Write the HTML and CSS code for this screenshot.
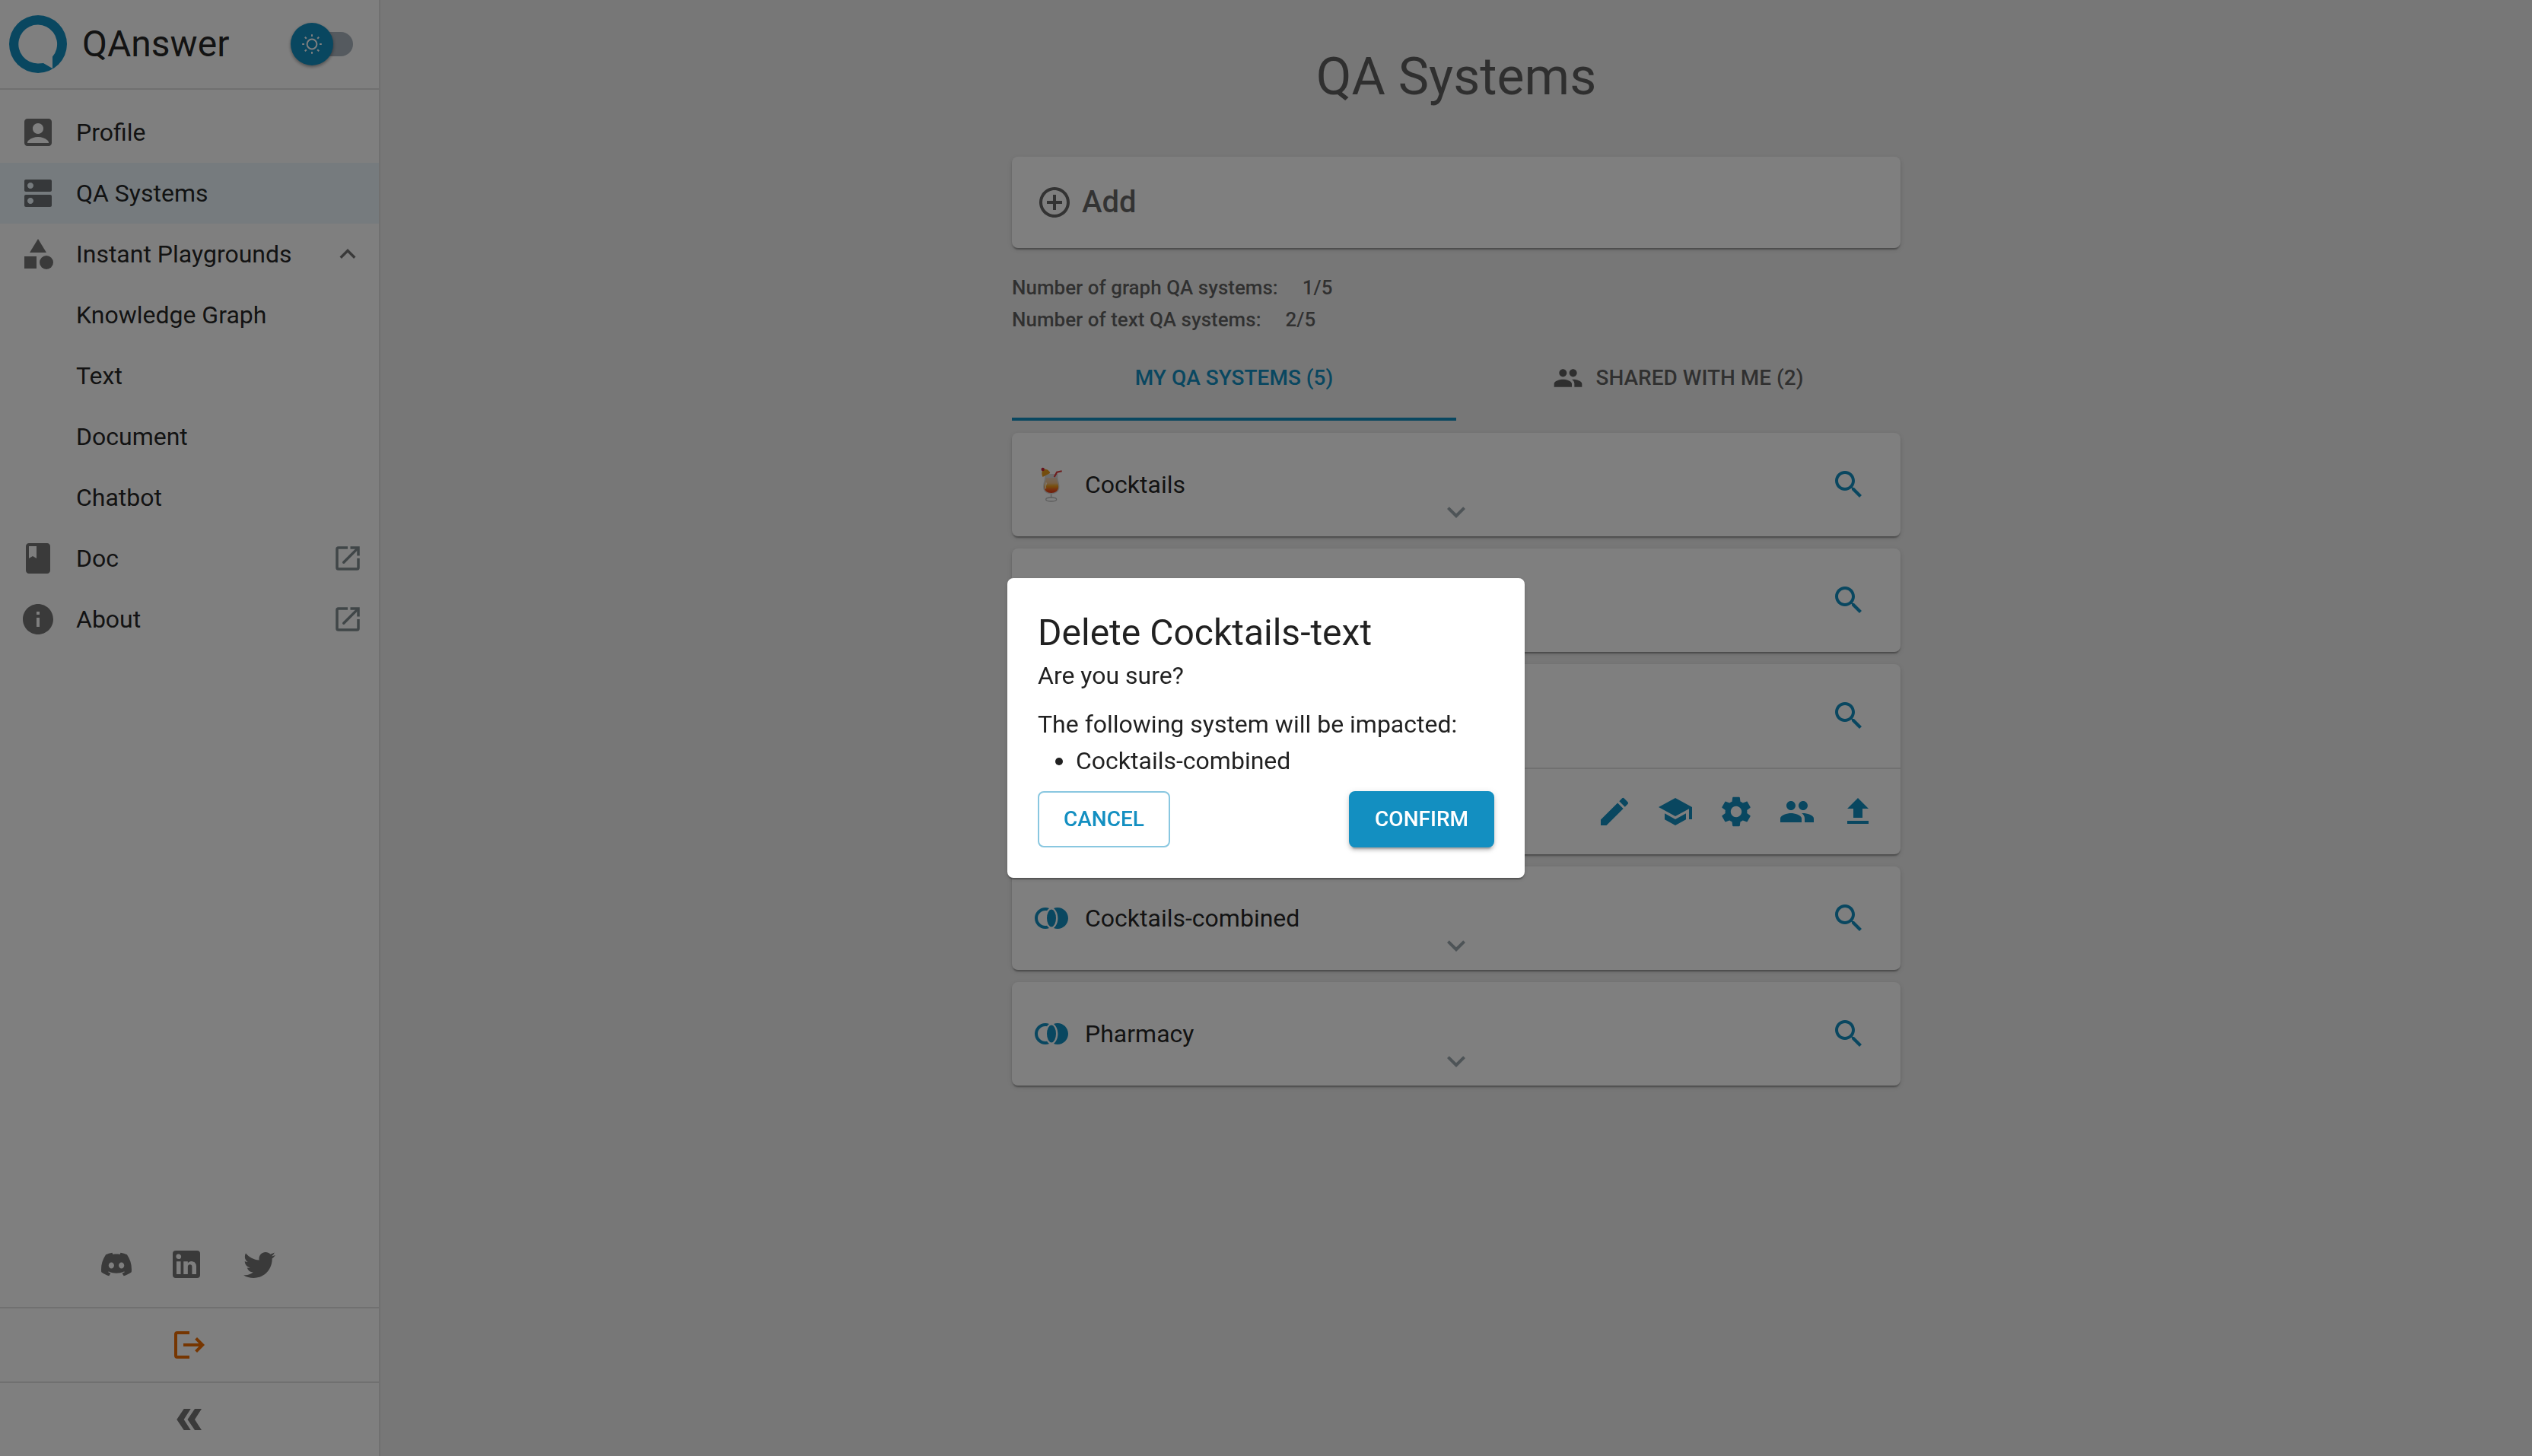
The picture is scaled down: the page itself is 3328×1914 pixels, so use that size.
FILE: index.html
```html
<!DOCTYPE html>
<html lang="en">
<head>
<meta charset="utf-8">
<meta name="viewport" content="width=device-width, initial-scale=1">
<title>QAnswer</title>
<link rel="stylesheet" href="styles.css">
</head>
<body>
<svg class="sprite" aria-hidden="true">
  <symbol id="i-open" viewBox="0 0 24 24"><g fill="none" stroke="currentColor" stroke-width="2"><path d="M12 4H5a1 1 0 0 0-1 1v14a1 1 0 0 0 1 1h14a1 1 0 0 0 1-1v-7M14 4h6v6"/><path stroke-linecap="round" d="M9 15 19.500 4.500"/></g></symbol>
  <symbol id="i-search" viewBox="0 0 24 24"><path d="M15.500 14h-.79l-.28-.27C15.410 12.590 16 11.110 16 9.500 16 5.910 13.090 3 9.500 3S3 5.910 3 9.500 5.910 16 9.500 16c1.610 0 3.090-.59 4.230-1.570l.27.28v.79l5 4.990L20.490 19l-4.990-5zm-6 0C7.010 14 5 11.990 5 9.500S7.010 5 9.500 5 14 7.010 14 9.500 11.990 14 9.500 14z"/></symbol>
  <symbol id="i-down" viewBox="0 0 24 24"><path d="M16.590 8.590 12 13.170 7.410 8.590 6 10l6 6 6-6z"/></symbol>
  <symbol id="i-people" viewBox="0 0 24 24"><path d="M16 11c1.660 0 2.990-1.340 2.990-3S17.660 5 16 5s-3 1.340-3 3 1.340 3 3 3zm-8 0c1.660 0 2.990-1.340 2.990-3S9.660 5 8 5 5 6.340 5 8s1.340 3 3 3zm0 2c-2.330 0-7 1.170-7 3.500V19h14v-2.500c0-2.330-4.670-3.500-7-3.500zm8 0c-.29 0-.62.02-.97.05 1.160.84 1.970 1.970 1.970 3.450V19h6v-2.500c0-2.330-4.670-3.500-7-3.500z"/></symbol>
  <symbol id="i-join" viewBox="0 0 24 24"><ellipse cx="12" cy="12" rx="3" ry="5.740"/><path d="M9.040 16.870c-.33.08-.68.13-1.040.13-2.760 0-5-2.240-5-5s2.240-5 5-5c.36 0 .71.05 1.040.13.39-.56.88-1.120 1.490-1.630C9.750 5.190 8.900 5 8 5c-3.860 0-7 3.140-7 7s3.140 7 7 7c.9 0 1.750-.19 2.530-.5-.61-.51-1.100-1.070-1.490-1.630zM16 5c-.9 0-1.750.19-2.530.5C15.400 7.100 16.200 9.600 16.200 12s-.8 4.900-2.730 6.500c.78.31 1.630.5 2.530.5 3.860 0 7-3.140 7-7s-3.140-7-7-7z"/></symbol>
</svg>

<div class="app">
  <aside class="sidebar">
    <header class="brand">
      <svg class="brand-logo" viewBox="0 0 76 76" aria-hidden="true"><circle cx="38" cy="38" r="38" fill="#138fc1"/><path d="M57 54.500V70L45 63c-2 .3-4.500.4-7 .4A25.400 25.400 0 1 1 57 54.500z" fill="#fff"/></svg>
      <span class="brand-name">QAnswer</span>
      <label class="switch">
        <input type="checkbox" class="switch-track" aria-label="Dark mode">
        <span class="switch-thumb">
          <svg viewBox="0 0 28 28" aria-hidden="true"><g fill="none" stroke="#fff" stroke-width="2"><circle cx="14" cy="14" r="6.400"/><path d="M14 1.200v2.800M14 24v2.800M1.200 14H4M24 14h2.800M4.800 4.800l2 2M21.200 21.200l2 2M4.800 23.200l2-2M21.200 6.800l2-2"/></g></svg>
        </span>
      </label>
    </header>

    <nav class="menu">
      <a class="menu-item" href="#profile">
        <svg class="icon" viewBox="0 0 24 24"><path d="M19 3H5c-1.100 0-2 .9-2 2v14c0 1.100.9 2 2 2h14c1.100 0 2-.9 2-2V5c0-1.100-.9-2-2-2zm-7 3c1.930 0 3.500 1.570 3.500 3.500S13.930 13 12 13s-3.500-1.570-3.500-3.500S10.070 6 12 6zm7 13H5v-.23c0-.62.28-1.200.76-1.580C7.470 15.820 9.640 15 12 15s4.530.82 6.240 2.190c.48.38.76.97.76 1.580V19z"/></svg>
        <span>Profile</span>
      </a>
      <a class="menu-item is-selected" href="#systems" aria-current="page">
        <svg class="icon" viewBox="0 0 24 24"><path d="M20 13H4c-.55 0-1 .45-1 1v6c0 .55.45 1 1 1h16c.55 0 1-.45 1-1v-6c0-.55-.45-1-1-1zM7 19c-1.100 0-2-.9-2-2s.9-2 2-2 2 .9 2 2-.9 2-2 2zM20 3H4c-.55 0-1 .45-1 1v6c0 .55.45 1 1 1h16c.55 0 1-.45 1-1V4c0-.55-.45-1-1-1zM7 9c-1.100 0-2-.9-2-2s.9-2 2-2 2 .9 2 2-.9 2-2 2z"/></svg>
        <span>QA Systems</span>
      </a>
      <button class="menu-item" type="button" aria-expanded="true">
        <svg class="icon" viewBox="0 0 24 24"><path d="m12 2-5.500 9h11z"/><circle cx="17.500" cy="17.500" r="4.500"/><path d="M3 13.500h8v8H3z"/></svg>
        <span>Instant Playgrounds</span>
        <svg class="icon-end" viewBox="0 0 24 24"><path d="m12 8-6 6 1.410 1.410L12 10.830l4.590 4.580L18 14z"/></svg>
      </button>
      <a class="menu-item is-nested" href="#graph">Knowledge Graph</a>
      <a class="menu-item is-nested" href="#text">Text</a>
      <a class="menu-item is-nested" href="#document">Document</a>
      <a class="menu-item is-nested" href="#chatbot">Chatbot</a>
      <a class="menu-item" href="#doc">
        <svg class="icon" viewBox="0 0 24 24"><path d="M18 2H6c-1.100 0-2 .9-2 2v16c0 1.100.9 2 2 2h12c1.100 0 2-.9 2-2V4c0-1.100-.9-2-2-2zM6 4h5v8l-2.500-1.500L6 12V4z"/></svg>
        <span>Doc</span>
        <svg class="icon-end is-external"><use href="#i-open"/></svg>
      </a>
      <a class="menu-item" href="#about">
        <svg class="icon" viewBox="0 0 24 24"><path d="M12 2C6.480 2 2 6.480 2 12s4.480 10 10 10 10-4.480 10-10S17.520 2 12 2zm1 15h-2v-6h2v6zm0-8h-2V7h2v2z"/></svg>
        <span>About</span>
        <svg class="icon-end is-external"><use href="#i-open"/></svg>
      </a>
    </nav>

    <div class="social">
      <a href="#discord" aria-label="Discord"><svg class="icon is-discord" viewBox="0 0 24 24"><path d="M20.317 4.3698a19.7913 19.7913 0 00-4.8851-1.5152.0741.0741 0 00-.0785.0371c-.211.3753-.4447.8648-.6083 1.2495-1.8447-.2762-3.68-.2762-5.4868 0-.1636-.3933-.4058-.8742-.6177-1.2495a.077.077 0 00-.0785-.037 19.7363 19.7363 0 00-4.8852 1.515.0699.0699 0 00-.0321.0277C.5334 9.0458-.319 13.5799.0992 18.0578a.0824.0824 0 00.0312.0561c2.0528 1.5076 4.0413 2.4228 5.9929 3.0294a.0777.0777 0 00.0842-.0276c.4616-.6304.8731-1.2952 1.226-1.9942a.076.076 0 00-.0416-.1057c-.6528-.2476-1.2743-.5495-1.8722-.8923a.077.077 0 01-.0076-.1277c.1258-.0943.2517-.1923.3718-.2914a.0743.0743 0 01.0776-.0105c3.9278 1.7933 8.18 1.7933 12.0614 0a.0739.0739 0 01.0785.0095c.1202.099.246.1981.3728.2924a.077.077 0 01-.0066.1276 12.2986 12.2986 0 01-1.873.8914.0766.0766 0 00-.0407.1067c.3604.698.7719 1.3628 1.225 1.9932a.076.076 0 00.0842.0286c1.961-.6067 3.9495-1.5219 6.0023-3.0294a.077.077 0 00.0313-.0552c.5004-5.177-.8382-9.6739-3.5485-13.6604a.061.061 0 00-.0312-.0286zM8.02 15.3312c-1.1825 0-2.1569-1.0857-2.1569-2.419 0-1.3332.9555-2.4189 2.157-2.4189 1.2108 0 2.1757 1.0952 2.1568 2.419 0 1.3332-.9555 2.4189-2.1569 2.4189zm7.9748 0c-1.1825 0-2.1569-1.0857-2.1569-2.419 0-1.3332.9554-2.4189 2.1569-2.4189 1.2108 0 2.1757 1.0952 2.1568 2.419 0 1.3332-.946 2.4189-2.1568 2.4189Z"/></svg></a>
      <a href="#linkedin" aria-label="LinkedIn"><svg class="icon" viewBox="0 0 24 24"><path d="M19 3a2 2 0 0 1 2 2v14a2 2 0 0 1-2 2H5a2 2 0 0 1-2-2V5a2 2 0 0 1 2-2h14m-.5 15.500v-5.300a3.260 3.260 0 0 0-3.260-3.260c-.85 0-1.840.52-2.320 1.300v-1.110h-2.790v8.370h2.790v-4.930c0-.77.62-1.400 1.390-1.400a1.400 1.400 0 0 1 1.400 1.400v4.930h2.790M6.880 8.560a1.680 1.680 0 0 0 1.680-1.680c0-.93-.75-1.690-1.680-1.690a1.690 1.690 0 0 0-1.690 1.690c0 .93.76 1.680 1.690 1.680m1.390 9.940v-8.370H5.500v8.370h2.770z"/></svg></a>
      <a href="#twitter" aria-label="Twitter"><svg class="icon" viewBox="0 0 24 24"><path d="M22.460 6c-.77.35-1.600.58-2.460.69.88-.53 1.560-1.370 1.880-2.380-.83.5-1.750.85-2.720 1.050C18.370 4.500 17.260 4 16 4c-2.350 0-4.270 1.920-4.270 4.290 0 .34.04.67.11.98C8.280 9.090 5.110 7.380 3 4.790c-.37.63-.58 1.370-.58 2.150 0 1.490.75 2.810 1.910 3.560-.71 0-1.370-.2-1.950-.5v.03c0 2.080 1.480 3.820 3.440 4.210a4.220 4.220 0 0 1-1.930.07 4.280 4.280 0 0 0 4 2.980 8.521 8.521 0 0 1-5.330 1.840c-.34 0-.68-.02-1.020-.06C3.440 20.290 5.700 21 8.120 21 16 21 20.330 14.460 20.330 8.790c0-.19 0-.37-.01-.56.84-.6 1.560-1.360 2.140-2.230z"/></svg></a>
    </div>
    <button class="side-action is-logout" type="button" aria-label="Log out">
      <svg class="icon" viewBox="0 0 24 24"><path fill="none" stroke="currentColor" stroke-width="2" d="M12 4H4a1 1 0 0 0-1 1v14a1 1 0 0 0 1 1h8M8 12h12.500M16.300 7.700 20.600 12l-4.300 4.300"/></svg>
    </button>
    <button class="side-action" type="button" aria-label="Collapse menu">
      <svg class="icon" viewBox="0 0 48 48"><path d="M7.300 24 16.700 10h9L16.700 24l9 14h-9zM21.500 24 31 10h9L31 24l9 14h-9z"/></svg>
    </button>
  </aside>

  <main class="main">
    <div class="content">
      <h1 class="title">QA Systems</h1>

      <button class="card add-card" type="button">
        <svg class="icon" viewBox="0 0 24 24"><path d="M13 7h-2v4H7v2h4v4h2v-4h4v-2h-4V7zm-1-5C6.480 2 2 6.480 2 12s4.480 10 10 10 10-4.480 10-10S17.520 2 12 2zm0 18c-4.410 0-8-3.590-8-8s3.590-8 8-8 8 3.590 8 8-3.590 8-8 8z"/></svg>
        <span>Add</span>
      </button>

      <dl class="quota">
        <div class="quota-row"><dt>Number of graph QA systems:</dt><dd>1/5</dd></div>
        <div class="quota-row"><dt>Number of text QA systems:</dt><dd>2/5</dd></div>
      </dl>

      <div class="tabs" role="tablist">
        <button class="tab is-active" type="button" role="tab" aria-selected="true">MY QA SYSTEMS (5)</button>
        <button class="tab" type="button" role="tab" aria-selected="false">
          <svg class="tab-icon"><use href="#i-people"/></svg>
          <span>SHARED WITH ME (2)</span>
        </button>
      </div>

      <div class="systems">
        <article class="card">
          <div class="system">
            <div class="system-name">
              <svg class="icon" viewBox="0 0 48 48" aria-hidden="true">
                <defs><linearGradient id="drink" x1="0" y1="0" x2="0" y2="1"><stop offset="0" stop-color="#e8cdb4"/><stop offset=".35" stop-color="#efc08a"/><stop offset=".55" stop-color="#f0a01c"/><stop offset=".8" stop-color="#ee5a1c"/><stop offset="1" stop-color="#e03818"/></linearGradient></defs>
                <path d="M15 10h17.500c-.3 3-.3 5 .4 8 .7 3 1.600 6 1.600 9 0 6-4.500 9.500-10.800 9.500S13 33 13 27c0-3 .9-6 1.600-9 .7-3 .7-5 .4-8z" fill="#ccc" fill-opacity=".75"/>
                <path d="M16.500 15h14.700c-.1 2 .1 3.500.6 5 .7 2.500 1.400 4.500 1.400 7 0 5-4 8-9.400 8s-9.400-3-9.400-8c0-2.500.7-4.500 1.400-7 .5-1.500.8-3 .7-5z" fill="url(#drink)"/>
                <path d="M22.700 36.500h2V42h-2z" fill="#ccc"/>
                <ellipse cx="23.700" cy="43.500" rx="7" ry="2.500" fill="none" stroke="#bcbcbc" stroke-width="1.300"/>
                <path d="M27.700 14 31.200 7.800l6.500-1.500" fill="none" stroke="#dc3c3c" stroke-width="2.200"/>
                <path d="M12.500 14c-1.500-3-1.500-6.500 0-9.500 3.500-2 9 .5 9.700 4.500z" fill="#e89a1c"/>
                <circle cx="12.700" cy="4" r="2.200" fill="#c82838"/>
                <path d="M17.500 21.500c-1.300 2.500-1.700 5-1.200 8" fill="none" stroke="#fff" stroke-opacity=".7" stroke-width="1.800"/>
              </svg>
              <span>Cocktails</span>
            </div>
            <button class="expand" type="button" aria-label="Expand"><svg class="icon"><use href="#i-down"/></svg></button>
            <button class="search" type="button" aria-label="Search"><svg class="icon"><use href="#i-search"/></svg></button>
          </div>
        </article>

        <article class="card">
          <div class="system">
            <button class="search" type="button" aria-label="Search"><svg class="icon"><use href="#i-search"/></svg></button>
          </div>
        </article>

        <article class="card">
          <div class="system">
            <button class="search" type="button" aria-label="Search"><svg class="icon"><use href="#i-search"/></svg></button>
          </div>
          <div class="system-actions">
            <button type="button" aria-label="Edit"><svg class="icon" viewBox="0 0 24 24"><path d="M3 17.250V21h3.750L17.810 9.940l-3.750-3.750L3 17.250zM20.710 7.040c.39-.39.39-1.020 0-1.410l-2.340-2.340a.9959.9959 0 0 0-1.410 0l-1.830 1.830 3.750 3.750 1.830-1.830z"/></svg></button>
            <button type="button" aria-label="Train"><svg class="icon" viewBox="0 0 24 24"><path d="M5 13.180v4L12 21l7-3.820v-4L12 17l-7-3.820zM12 3 1 9l11 6 9-4.910V17h2V9L12 3z"/></svg></button>
            <button type="button" aria-label="Settings"><svg class="icon" viewBox="0 0 24 24"><path d="M19.140 12.940c.04-.3.06-.61.06-.94 0-.32-.02-.64-.07-.94l2.030-1.580c.18-.14.23-.41.12-.61l-1.920-3.320c-.12-.22-.37-.29-.59-.22l-2.390.96c-.5-.38-1.030-.7-1.620-.94l-.36-2.540c-.04-.24-.24-.41-.48-.41h-3.840c-.24 0-.43.17-.47.41l-.36 2.540c-.59.24-1.130.57-1.620.94l-2.390-.96c-.22-.08-.47 0-.59.22L2.740 8.870c-.12.21-.08.47.12.61l2.030 1.580c-.05.3-.09.63-.09.94s.02.64.07.94l-2.030 1.580c-.18.14-.23.41-.12.61l1.920 3.320c.12.22.37.29.59.22l2.390-.96c.5.38 1.030.7 1.620.94l.36 2.540c.05.24.24.41.48.41h3.840c.24 0 .44-.17.47-.41l.36-2.540c.59-.24 1.130-.56 1.620-.94l2.390.96c.22.08.47 0 .59-.22l1.920-3.320c.12-.22.07-.47-.12-.61l-2.010-1.580zM12 15.600c-1.980 0-3.600-1.620-3.600-3.600s1.620-3.600 3.600-3.600 3.600 1.620 3.600 3.600-1.620 3.600-3.600 3.600z"/></svg></button>
            <button type="button" aria-label="Share"><svg class="icon"><use href="#i-people"/></svg></button>
            <button type="button" aria-label="Upload"><svg class="icon" viewBox="0 0 24 24"><path d="M5 20h14v-2H5v2zm0-10h4v6h6v-6h4l-7-7-7 7z"/></svg></button>
          </div>
        </article>

        <article class="card">
          <div class="system">
            <div class="system-name"><svg class="icon is-primary"><use href="#i-join"/></svg><span>Cocktails-combined</span></div>
            <button class="expand" type="button" aria-label="Expand"><svg class="icon"><use href="#i-down"/></svg></button>
            <button class="search" type="button" aria-label="Search"><svg class="icon"><use href="#i-search"/></svg></button>
          </div>
        </article>

        <article class="card">
          <div class="system">
            <div class="system-name"><svg class="icon is-primary"><use href="#i-join"/></svg><span>Pharmacy</span></div>
            <button class="expand" type="button" aria-label="Expand"><svg class="icon"><use href="#i-down"/></svg></button>
            <button class="search" type="button" aria-label="Search"><svg class="icon"><use href="#i-search"/></svg></button>
          </div>
        </article>
      </div>
    </div>
  </main>
</div>

<div class="backdrop">
  <section class="dialog" role="dialog" aria-modal="true" aria-labelledby="dialog-title">
    <h2 class="dialog-title" id="dialog-title">Delete Cocktails-text</h2>
    <p class="dialog-question">Are you sure?</p>
    <p class="dialog-note">The following system will be impacted:</p>
    <ul class="dialog-list"><li>Cocktails-combined</li></ul>
    <div class="dialog-actions">
      <button class="btn btn-outlined" type="button">CANCEL</button>
      <button class="btn btn-contained" type="button">CONFIRM</button>
    </div>
  </section>
</div>
</body>
</html>
```
FILE: styles.css
```css
:root {
  --primary: #138fc1;
  --text: rgba(0, 0, 0, 0.87);
  --text-secondary: rgba(0, 0, 0, 0.6);
  --icon: rgba(0, 0, 0, 0.54);
  --divider: #e0e0e0;
}

* {
  box-sizing: border-box;
}

body {
  margin: 0;
  background: #eee;
  color: var(--text);
  font-family: Roboto, "Liberation Sans", sans-serif;
  font-size: 32px;
  line-height: 48px;
}

button {
  padding: 0;
  border: 0;
  background: none;
  color: inherit;
  font: inherit;
  cursor: pointer;
}

a {
  color: inherit;
  text-decoration: none;
}

svg {
  display: block;
  flex: none;
  fill: currentColor;
}

.sprite {
  display: none;
}

.icon {
  width: 48px;
  height: 48px;
}

.icon.is-primary {
  color: var(--primary);
}

.app {
  display: flex;
  min-height: 100vh;
}

/* Sidebar */

.sidebar {
  display: flex;
  flex: none;
  flex-direction: column;
  width: 500px;
  border-right: 2px solid var(--divider);
  background: #fff;
}

.brand {
  display: flex;
  align-items: center;
  height: 118px;
  padding: 0 34px 0 12px;
  border-bottom: 2px solid var(--divider);
}

.brand-logo {
  width: 76px;
  height: 76px;
}

.brand-name {
  flex: 1;
  margin-left: 20px;
  font-size: 48px;
}

.switch {
  position: relative;
  display: flex;
  align-items: center;
  width: 82px;
  height: 56px;
}

.switch-track {
  width: 76px;
  height: 32px;
  margin: 0 0 0 auto;
  border-radius: 16px;
  background: #aab4be;
  appearance: none;
}

.switch-thumb {
  position: absolute;
  top: 0;
  left: 0;
  display: grid;
  place-items: center;
  width: 56px;
  height: 56px;
  border-radius: 50%;
  background: var(--primary);
  box-shadow: 0 2px 4px rgba(0, 0, 0, 0.4);
}

.switch-thumb svg {
  width: 28px;
  height: 28px;
}

.menu {
  display: flex;
  flex: 1;
  flex-direction: column;
  padding: 16px 0;
}

.menu-item {
  display: flex;
  align-items: center;
  gap: 26px;
  height: 80px;
  padding: 0 20px 0 26px;
  text-align: left;
}

.menu-item.is-selected {
  background: #ecf6fc;
}

.menu-item.is-nested {
  padding-left: 100px;
}

.menu-item .icon {
  color: var(--icon);
}

.icon-end {
  width: 42px;
  height: 42px;
  margin-left: auto;
  color: var(--icon);
}

.icon-end.is-external {
  color: #808c90;
}

.social {
  display: flex;
  align-items: center;
  justify-content: center;
  gap: 48px;
  padding: 32px 0;
  color: var(--icon);
}

.icon.is-discord {
  width: 40px;
  height: 40px;
}

.side-action {
  display: grid;
  place-items: center;
  height: 98px;
  border-top: 2px solid var(--divider);
  color: var(--icon);
}

.side-action.is-logout {
  color: #ed6c02;
}

/* Main column */

.main {
  flex: 1;
  padding: 60px 32px;
}

.content {
  max-width: 1168px;
  margin: 0 auto;
  color: var(--text-secondary);
}

.title {
  margin: 0 0 64px;
  font-size: 68px;
  font-weight: 400;
  line-height: 82px;
  text-align: center;
}

.card {
  border-radius: 8px;
  background: #fff;
  box-shadow: 0 4px 2px -2px rgba(0, 0, 0, 0.2), 0 2px 2px rgba(0, 0, 0, 0.14), 0 2px 6px rgba(0, 0, 0, 0.12);
}

.add-card {
  display: flex;
  align-items: center;
  gap: 12px;
  width: 100%;
  height: 120px;
  padding: 0 32px;
  font-size: 40px;
  font-weight: 500;
}

.quota {
  margin: 31px 0 0;
  font-size: 26px;
  font-weight: 500;
  line-height: 42px;
}

.quota-row {
  display: flex;
  gap: 32px;
}

.quota dd {
  margin: 0;
}

.tabs {
  display: flex;
}

.tab {
  display: flex;
  flex: 1;
  align-items: center;
  justify-content: center;
  gap: 16px;
  height: 112px;
  font-size: 28px;
  font-weight: 500;
}

.tab.is-active {
  box-shadow: inset 0 -4px var(--primary);
  color: var(--primary);
}

.tab-icon {
  width: 40px;
  height: 40px;
}

.systems {
  display: grid;
  gap: 16px;
  margin-top: 16px;
}

.system {
  display: grid;
  grid-template-columns: 1fr auto 1fr;
  align-items: center;
  height: 136px;
  padding: 0 44px;
}

.system-name {
  display: flex;
  grid-column: 1;
  align-items: center;
  gap: 20px;
  margin-left: -16px;
  color: var(--text);
}

.expand {
  grid-column: 2;
  align-self: end;
  margin-bottom: 8px;
  color: #9ca8ae;
}

.search {
  grid-column: 3;
  justify-self: end;
  color: var(--primary);
}

.system-actions {
  display: flex;
  align-items: center;
  justify-content: flex-end;
  gap: 32px;
  height: 114px;
  padding: 0 32px;
  border-top: 2px solid var(--divider);
  color: var(--primary);
}

/* Dialog */

.backdrop {
  position: fixed;
  inset: 0;
  display: grid;
  place-items: center;
  background: rgba(0, 0, 0, 0.5);
}

.dialog {
  width: 680px;
  padding: 40px;
  border-radius: 8px;
  background: #fff;
  box-shadow: 0 4px 2px -2px rgba(0, 0, 0, 0.2), 0 2px 2px rgba(0, 0, 0, 0.14), 0 2px 6px rgba(0, 0, 0, 0.12);
}

.dialog-title {
  margin: 0;
  font-size: 48px;
  font-weight: 400;
  line-height: 64px;
}

.dialog-question {
  margin: 0 0 16px;
}

.dialog-note {
  margin: 0;
}

.dialog-list {
  margin: 0 0 16px;
  padding-left: 50px;
}

.dialog-actions {
  display: flex;
  justify-content: space-between;
}

.btn {
  height: 74px;
  padding: 0 32px;
  border: 2px solid transparent;
  border-radius: 8px;
  font-size: 28px;
  font-weight: 500;
}

.btn-outlined {
  border-color: rgba(19, 143, 193, 0.5);
  color: var(--primary);
}

.btn-contained {
  border-color: var(--primary);
  background: var(--primary);
  color: #fff;
  box-shadow: 0 6px 2px -4px rgba(0, 0, 0, 0.2), 0 4px 4px rgba(0, 0, 0, 0.14), 0 2px 10px rgba(0, 0, 0, 0.12);
}
```
